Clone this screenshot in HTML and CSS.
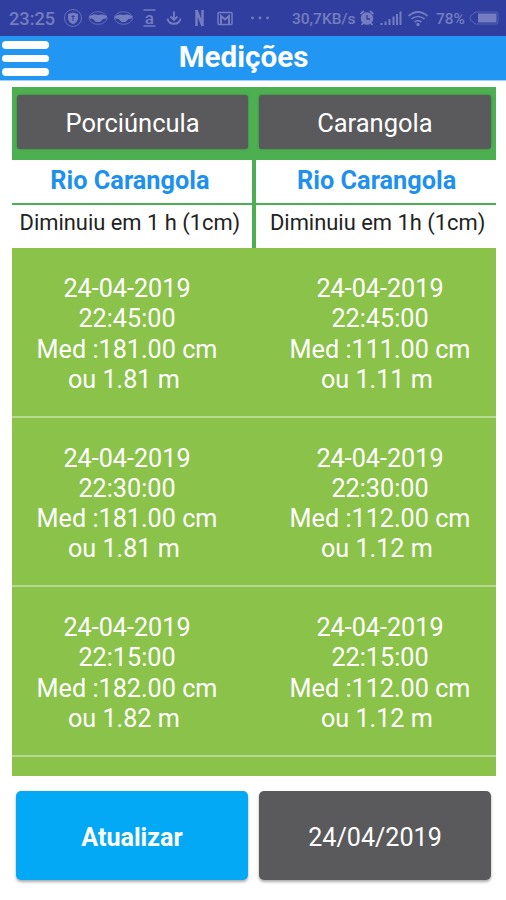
FILE: index.html
```html
<!DOCTYPE html>
<html lang="pt-BR">
<head>
    <meta charset="UTF-8">
    <title>Medições</title>
    <meta name="viewport" content="width=device-width, initial-scale=1.0">
    <link rel="stylesheet" href="styles.css">
</head>
<body>
    <div class="status-bar">
        <span class="clock">23:25</span>
        <svg class="status-icons" width="216" height="36" viewBox="0 0 216 36" fill="none" stroke="currentColor" stroke-width="1.5">
            <!-- shield -->
            <circle cx="12" cy="18" r="8.5" stroke-width="1" opacity=".8"/>
            <path d="M12 12.500l5 1.500v4c0 3-2 5-5 6.200-3-1.200-5-3.200-5-6.200v-4z" fill="currentColor" stroke="none"/>
            <path d="M12 15v6M10.500 16.500h3" stroke="#303f9f" stroke-width="1"/>
            <!-- handshakes -->
            <g id="handshake">
                <ellipse cx="37" cy="18" rx="9" ry="6.3" stroke-width="1" opacity=".7"/>
                <path d="M28 16.500q4-2.500 6-2l3 .5 3-.5q3-.5 6 2l-1 2-3 .5-3 3h-4l-3-3-3-.5z" fill="currentColor" stroke="none"/>
            </g>
            <use href="#handshake" x="25.500"/>
            <!-- lines around the letter -->
            <path d="M82.500 10h12M82.500 26h12"/>
            <text x="83.700" y="24" class="letter-a">a</text>
            <!-- download -->
            <path d="M113 11.500v8M109.500 16.500l3.500 3.500 3.500-3.500M106.500 18.500c1 7 12 7 13 0" stroke-width="1.800"/>
            <!-- N -->
            <path d="M135.500 26V10M141.500 26V10M135.500 10l6 16" stroke-width="2.500"/>
            <!-- mail -->
            <rect x="157" y="12.500" width="14" height="12" rx="1" stroke-width="1.500"/>
            <path d="M160 24v-8l4 3.500 4-3.500v8" stroke-width="2"/>
            <!-- more -->
            <g fill="currentColor" stroke="none">
                <circle cx="191.500" cy="18" r="1.400"/>
                <circle cx="199" cy="18" r="1.400"/>
                <circle cx="206.500" cy="18" r="1.400"/>
            </g>
        </svg>
        <span class="speed">30,7KB/s</span>
        <svg class="signal-icons" width="70" height="36" viewBox="0 0 70 36" fill="none" stroke="currentColor">
            <!-- alarm -->
            <circle cx="8" cy="18.500" r="6.300" fill="currentColor" stroke="none"/>
            <path d="M1.500 14l3.500-3M14.500 14l-3.500-3M4 23l-1.500 2M12 23l1.500 2" stroke-width="1.700"/>
            <path d="M8 15v4h3" stroke="#303f9f" stroke-width="1.300"/>
            <!-- signal bars -->
            <path d="M22.500 25v-2M26.500 25v-3.500M30.500 25v-6M34.500 25v-8.500M38 25V14M41.500 25V11.500" stroke-width="2"/>
            <!-- wifi -->
            <path d="M49.500 16q9.500-8 19 0M52.500 19q6.500-5 13 0M55.500 22q3.500-2.500 7 0" stroke-width="1.700"/>
            <circle cx="59" cy="24.500" r="1.700" fill="currentColor" stroke="none"/>
        </svg>
        <span class="percent">78%</span>
        <svg class="battery" width="32" height="36" viewBox="0 0 32 36">
            <path d="M28 12H8q-2.500 0-3 2.500-3 0-3 3.500t3 3.500q.5 2.500 3 2.500h20q2 0 2-2v-8q0-2-2-2z" fill="none" stroke="currentColor" opacity=".55"/>
            <path d="M10 13.500h18.500v9H10z" fill="currentColor"/>
        </svg>
    </div>

    <header class="app-header">
        <div class="menu">
            <span></span>
            <span></span>
            <span></span>
        </div>
        <h1>Medições</h1>
    </header>

    <main class="board">
        <div class="cities">
            <button type="button">Porciúncula</button>
            <button type="button">Carangola</button>
        </div>
        <div class="rivers">
            <div class="river">
                <h2>Rio Carangola</h2>
                <p>Diminuiu em 1 h (1cm)</p>
            </div>
            <div class="river">
                <h2>Rio Carangola</h2>
                <p>Diminuiu em 1h (1cm)</p>
            </div>
        </div>
        <div class="list">
            <div class="row">
                <p>24-04-2019<br>22:45:00<br>Med :181.00 cm<br>ou 1.81 m&nbsp;</p>
                <p>24-04-2019<br>22:45:00<br>Med :111.00 cm<br>ou 1.11 m&nbsp;</p>
            </div>
            <div class="row">
                <p>24-04-2019<br>22:30:00<br>Med :181.00 cm<br>ou 1.81 m&nbsp;</p>
                <p>24-04-2019<br>22:30:00<br>Med :112.00 cm<br>ou 1.12 m&nbsp;</p>
            </div>
            <div class="row">
                <p>24-04-2019<br>22:15:00<br>Med :182.00 cm<br>ou 1.82 m&nbsp;</p>
                <p>24-04-2019<br>22:15:00<br>Med :112.00 cm<br>ou 1.12 m&nbsp;</p>
            </div>
        </div>
    </main>

    <footer class="actions">
        <button type="button" class="update">Atualizar</button>
        <button type="button">24/04/2019</button>
    </footer>
</body>
</html>
```
FILE: styles.css
```css
:root {
    --status: #303f9f;
    --status-text: #737dc0;
    --header: #2196f3;
    --green: #4caf50;
    --lime: #8bc34a;
    --gray: #5a5a5c;
}
* {
    box-sizing: border-box;
}
body {
    margin: 0;
    height: 900px;
    overflow: hidden;
    background: #fff;
    font-family: Roboto, sans-serif;
    display: flex;
    flex-direction: column;
}
h1, h2, p {
    margin: 0;
}
.status-bar {
    height: 36px;
    flex: none;
    display: flex;
    align-items: center;
    padding-left: 9px;
    background: var(--status);
    color: var(--status-text);
    font-weight: 500;
    white-space: nowrap;
}
.status-bar svg {
    flex: none;
}
.clock {
    width: 52px;
    font-size: 18.2px;
    padding-top: 1px;
}
.letter-a {
    font-size: 17px;
    font-weight: 500;
    fill: currentColor;
    stroke: none;
}
.speed {
    width: 67px;
    margin-left: 15px;
    padding-top: 2px;
    font-size: 15.5px;
}
.percent {
    width: 32px;
    margin-left: 7px;
    padding-top: 2px;
    font-size: 15.5px;
}
.app-header {
    height: 45px;
    flex: none;
    display: flex;
    align-items: center;
    background: var(--header);
    border-bottom: 1px solid #a5d0fa;
    color: #fff;
}
.menu {
    width: 50px;
    padding: 1px 0 0 2px;
    display: flex;
    flex-direction: column;
    gap: 6px;
}
.menu span {
    width: 47px;
    height: 7.6px;
    border-radius: 4px;
    background: #fff;
}
.app-header h1 {
    flex: 1;
    padding: 0 69px 2px 0;
    text-align: center;
    font-size: 29.6px;
    line-height: 40px;
    font-weight: 700;
}
.board {
    width: 483.5px;
    height: 689px;
    margin: 6px 0 0 12px;
    flex: none;
}
.cities {
    height: 73px;
    display: flex;
    gap: 11px;
    padding: 8px 5px 11px;
    background: var(--green);
}
button {
    flex: 1;
    border: none;
    padding: 0;
    border-radius: 3px;
    background: var(--gray);
    color: #fff;
    font-family: inherit;
    font-size: 25.5px;
}
.cities button {
    box-shadow: 0 0 2px #0005;
    padding-top: 2px;
}
.rivers {
    height: 88px;
    display: flex;
    gap: 4px;
    background: var(--green);
}
.river {
    flex: 1;
    display: flex;
    flex-direction: column;
    gap: 2px;
    text-align: center;
}
.river h2 {
    height: 43px;
    padding-right: 4px;
    background: #fff;
    color: #1e90ef;
    font-size: 25.3px;
    line-height: 41px;
    font-weight: 700;
}
.river p {
    flex: 1;
    padding-right: 4px;
    background: #fff;
    color: #222;
    font-size: 21.9px;
    line-height: 35px;
}
.river + .river h2 {
    padding: 0 0 0 2px;
}
.river + .river p {
    padding: 0 0 0 4px;
}
.list {
    height: 528px;
    background: var(--lime);
}
.row {
    height: 169.5px;
    display: flex;
    padding-top: 26px;
    border-bottom: 2px solid #b7da90;
    color: #fff;
    text-align: center;
    font-size: 25.2px;
    line-height: 30.3px;
}
.row p {
    width: 230px;
}
.row p + p {
    margin-left: 23px;
}
.actions {
    display: flex;
    gap: 11px;
    height: 89px;
    margin: 15px 15px 0 16px;
    flex: none;
}
.actions button {
    border-radius: 5px;
    box-shadow: 0 2px 3px #0005;
    font-size: 25.1px;
    padding-top: 3px;
}
.actions .update {
    background: #03a9f4;
    font-weight: 700;
}
```
